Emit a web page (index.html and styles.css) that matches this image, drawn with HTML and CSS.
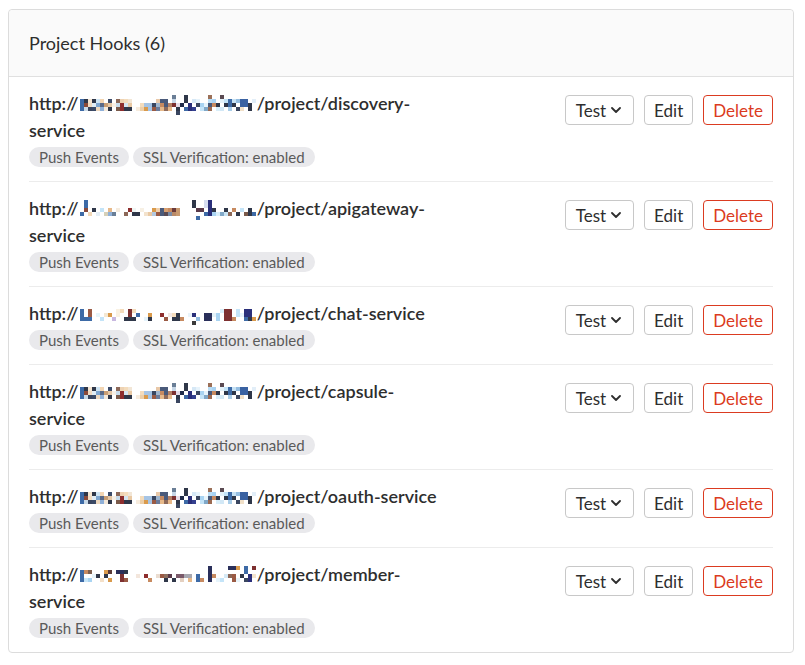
FILE: index.html
```html
<!DOCTYPE html>
<html lang="en">
<head>
<meta charset="utf-8">
<title>Project Hooks</title>
<link rel="stylesheet" href="styles.css">
</head>
<body>
<svg class="defs" width="0" height="0" aria-hidden="true">
  <defs>
    <symbol id="mA" viewBox="0 0 176 20">
      <rect x="0" y="4" width="4" height="12" fill="#3d6aa6"/>
      <rect x="4" y="4" width="4" height="4" fill="#2f3749"/>
      <rect x="4" y="8" width="4" height="4" fill="#8a4a3a"/>
      <rect x="4" y="12" width="4" height="4" fill="#c9d9e6"/>
      <rect x="8" y="4" width="4" height="4" fill="#f6e6d2"/>
      <rect x="8" y="8" width="4" height="4" fill="#f1dcc2"/>
      <rect x="8" y="12" width="4" height="4" fill="#3a4660"/>
      <rect x="12" y="4" width="4" height="4" fill="#2f3749"/>
      <rect x="12" y="8" width="4" height="4" fill="#e1edf5"/>
      <rect x="12" y="12" width="4" height="4" fill="#3b4a66"/>
      <rect x="16" y="4" width="4" height="4" fill="#cfe4f2"/>
      <rect x="16" y="8" width="4" height="4" fill="#7fa6cf"/>
      <rect x="16" y="12" width="4" height="4" fill="#eed8be"/>
      <rect x="20" y="4" width="4" height="4" fill="#f2d5b3"/>
      <rect x="20" y="8" width="4" height="4" fill="#5a6a88"/>
      <rect x="20" y="12" width="4" height="4" fill="#8fb0d8"/>
      <rect x="24" y="8" width="4" height="4" fill="#c99e74"/>
      <rect x="24" y="12" width="4" height="4" fill="#f5e9da"/>
      <rect x="28" y="4" width="4" height="4" fill="#3c4c6a"/>
      <rect x="28" y="8" width="4" height="4" fill="#e4c6a4"/>
      <rect x="28" y="12" width="4" height="4" fill="#2f3749"/>
      <rect x="32" y="8" width="4" height="4" fill="#f8efe4"/>
      <rect x="36" y="4" width="4" height="4" fill="#8c6858"/>
      <rect x="36" y="8" width="4" height="4" fill="#c7dcec"/>
      <rect x="36" y="12" width="4" height="4" fill="#7a5a4a"/>
      <rect x="40" y="4" width="4" height="4" fill="#eed2b2"/>
      <rect x="40" y="8" width="4" height="8" fill="#8e2e2e"/>
      <rect x="44" y="4" width="4" height="4" fill="#f4dcbc"/>
      <rect x="44" y="8" width="4" height="4" fill="#d6e6f2"/>
      <rect x="44" y="12" width="8" height="4" fill="#2f3749"/>
      <rect x="48" y="8" width="4" height="4" fill="#e9c9a4"/>
      <rect x="48" y="4" width="4" height="4" fill="#f2e6d6"/>
      <rect x="56" y="12" width="4" height="4" fill="#f7ecde"/>
      <rect x="60" y="8" width="4" height="4" fill="#f4dcbc"/>
      <rect x="60" y="12" width="4" height="4" fill="#edcfa8"/>
      <rect x="64" y="8" width="4" height="4" fill="#a6c4e4"/>
      <rect x="64" y="12" width="4" height="4" fill="#d99a4c"/>
      <rect x="68" y="8" width="4" height="8" fill="#a6c4e4"/>
      <rect x="72" y="8" width="4" height="4" fill="#3a4660"/>
      <rect x="72" y="12" width="4" height="4" fill="#9a5a44"/>
      <rect x="76" y="4" width="4" height="4" fill="#e8c8a8"/>
      <rect x="76" y="8" width="4" height="4" fill="#9fb6cf"/>
      <rect x="76" y="12" width="4" height="4" fill="#6b7b9a"/>
      <rect x="80" y="4" width="4" height="4" fill="#4a5a7a"/>
      <rect x="80" y="8" width="4" height="4" fill="#c78a60"/>
      <rect x="80" y="12" width="4" height="4" fill="#e7b98a"/>
      <rect x="84" y="4" width="4" height="8" fill="#4a5a7a"/>
      <rect x="84" y="12" width="4" height="4" fill="#8e6a5a"/>
      <rect x="88" y="8" width="4" height="4" fill="#b38066"/>
      <rect x="88" y="12" width="4" height="4" fill="#e7b98a"/>
      <rect x="92" y="0" width="4" height="4" fill="#6a7e96"/>
      <rect x="92" y="4" width="4" height="4" fill="#c6d6e6"/>
      <rect x="92" y="8" width="4" height="4" fill="#7d3030"/>
      <rect x="96" y="8" width="4" height="4" fill="#e6dce8"/>
      <rect x="96" y="12" width="4" height="4" fill="#2f3749"/>
      <rect x="96" y="16" width="4" height="4" fill="#3a4660"/>
      <rect x="100" y="8" width="4" height="4" fill="#1f2b4a"/>
      <rect x="104" y="0" width="4" height="8" fill="#2f3749"/>
      <rect x="104" y="12" width="4" height="4" fill="#3d6aa6"/>
      <rect x="108" y="8" width="4" height="8" fill="#2a2f7a"/>
      <rect x="112" y="4" width="4" height="4" fill="#d6e8f6"/>
      <rect x="112" y="12" width="4" height="4" fill="#34408e"/>
      <rect x="116" y="4" width="4" height="4" fill="#e7f3fb"/>
      <rect x="116" y="8" width="4" height="4" fill="#3a4660"/>
      <rect x="120" y="8" width="4" height="4" fill="#a9d4f2"/>
      <rect x="120" y="12" width="4" height="4" fill="#c4e4f8"/>
      <rect x="124" y="8" width="4" height="4" fill="#e6f4fc"/>
      <rect x="124" y="12" width="4" height="4" fill="#80a8c8"/>
      <rect x="128" y="0" width="4" height="4" fill="#9b7058"/>
      <rect x="128" y="4" width="4" height="4" fill="#b9dcf4"/>
      <rect x="128" y="8" width="4" height="4" fill="#4a5a7a"/>
      <rect x="128" y="12" width="4" height="4" fill="#9a6a52"/>
      <rect x="132" y="4" width="4" height="4" fill="#a8d2f2"/>
      <rect x="132" y="8" width="4" height="4" fill="#c78a60"/>
      <rect x="136" y="8" width="4" height="4" fill="#2f3749"/>
      <rect x="136" y="12" width="4" height="4" fill="#d9eef9"/>
      <rect x="140" y="0" width="4" height="4" fill="#5a4a52"/>
      <rect x="140" y="4" width="4" height="4" fill="#e4f2fa"/>
      <rect x="140" y="12" width="4" height="4" fill="#d2e8f6"/>
      <rect x="144" y="4" width="4" height="4" fill="#c4e4f8"/>
      <rect x="144" y="8" width="4" height="4" fill="#2f3749"/>
      <rect x="148" y="4" width="4" height="8" fill="#3d6aa6"/>
      <rect x="148" y="12" width="4" height="4" fill="#a9cde8"/>
      <rect x="152" y="8" width="4" height="4" fill="#2f3749"/>
      <rect x="152" y="4" width="4" height="4" fill="#c7e2f4"/>
      <rect x="156" y="4" width="4" height="4" fill="#94bde0"/>
      <rect x="156" y="12" width="4" height="4" fill="#3a4660"/>
      <rect x="160" y="4" width="8" height="8" fill="#3a62a2"/>
      <rect x="160" y="12" width="4" height="4" fill="#f1e0c8"/>
      <rect x="168" y="8" width="4" height="8" fill="#2f3749"/>
      <rect x="172" y="4" width="4" height="4" fill="#e2eef8"/>
    </symbol>
    <symbol id="mB" viewBox="0 0 176 20">
      <rect x="4" y="0" width="4" height="8" fill="#3d6aa6"/>
      <rect x="4" y="8" width="4" height="4" fill="#8a4a3a"/>
      <rect x="0" y="12" width="4" height="4" fill="#3d6aa6"/>
      <rect x="8" y="12" width="4" height="4" fill="#f2d8b8"/>
      <rect x="12" y="8" width="4" height="4" fill="#2f3749"/>
      <rect x="16" y="12" width="4" height="4" fill="#e4eef6"/>
      <rect x="20" y="8" width="4" height="4" fill="#c4e4f8"/>
      <rect x="24" y="12" width="4" height="4" fill="#d6d0b8"/>
      <rect x="28" y="8" width="4" height="4" fill="#e7b98a"/>
      <rect x="28" y="12" width="4" height="4" fill="#8fb0d8"/>
      <rect x="32" y="12" width="4" height="4" fill="#6a7e96"/>
      <rect x="36" y="8" width="4" height="4" fill="#f6ecdf"/>
      <rect x="44" y="12" width="4" height="4" fill="#8c6858"/>
      <rect x="48" y="8" width="4" height="4" fill="#8e2e2e"/>
      <rect x="52" y="8" width="4" height="4" fill="#eef6f4"/>
      <rect x="52" y="12" width="8" height="4" fill="#2f3749"/>
      <rect x="60" y="8" width="4" height="4" fill="#f7f0e4"/>
      <rect x="64" y="12" width="4" height="4" fill="#f3e2cc"/>
      <rect x="68" y="12" width="4" height="4" fill="#e9c9a4"/>
      <rect x="72" y="8" width="4" height="4" fill="#d99a4c"/>
      <rect x="72" y="12" width="4" height="4" fill="#b3c9e0"/>
      <rect x="76" y="12" width="4" height="4" fill="#9a5a44"/>
      <rect x="76" y="8" width="4" height="4" fill="#f0d0ac"/>
      <rect x="80" y="8" width="4" height="8" fill="#4a5a7a"/>
      <rect x="84" y="12" width="4" height="4" fill="#5a4a52"/>
      <rect x="84" y="8" width="4" height="4" fill="#d8a070"/>
      <rect x="88" y="8" width="4" height="4" fill="#c78a60"/>
      <rect x="88" y="12" width="4" height="4" fill="#7a8ca6"/>
      <rect x="92" y="8" width="4" height="4" fill="#6a3a3a"/>
      <rect x="92" y="12" width="4" height="4" fill="#b98a68"/>
      <rect x="96" y="8" width="4" height="8" fill="#c89a70"/>
      <rect x="112" y="0" width="4" height="8" fill="#2f3749"/>
      <rect x="116" y="8" width="8" height="4" fill="#5a3a4a"/>
      <rect x="116" y="16" width="4" height="4" fill="#3d6aa6"/>
      <rect x="124" y="12" width="4" height="4" fill="#3d6aa6"/>
      <rect x="124" y="0" width="4" height="8" fill="#d6ddf0"/>
      <rect x="128" y="0" width="4" height="16" fill="#2a2f7a"/>
      <rect x="132" y="12" width="4" height="4" fill="#a9d4f2"/>
      <rect x="132" y="8" width="4" height="4" fill="#2f3749"/>
      <rect x="136" y="12" width="4" height="4" fill="#d9eef9"/>
      <rect x="140" y="12" width="4" height="4" fill="#80a8c8"/>
      <rect x="144" y="8" width="4" height="4" fill="#2f3749"/>
      <rect x="144" y="12" width="4" height="4" fill="#c8e4f4"/>
      <rect x="148" y="12" width="4" height="4" fill="#8c6858"/>
      <rect x="152" y="8" width="4" height="4" fill="#c78a60"/>
      <rect x="156" y="12" width="4" height="4" fill="#2f3749"/>
      <rect x="160" y="8" width="4" height="4" fill="#c4e4f8"/>
      <rect x="164" y="12" width="4" height="4" fill="#7a5a4a"/>
      <rect x="168" y="8" width="4" height="8" fill="#2f3749"/>
      <rect x="172" y="12" width="4" height="4" fill="#3d6aa6"/>
    </symbol>
    <symbol id="mC" viewBox="0 0 176 20">
      <rect x="0" y="4" width="4" height="12" fill="#3d6aa6"/>
      <rect x="4" y="12" width="4" height="4" fill="#3d6aa6"/>
      <rect x="8" y="4" width="4" height="8" fill="#9a5a44"/>
      <rect x="8" y="12" width="4" height="4" fill="#3d6aa6"/>
      <rect x="16" y="8" width="4" height="4" fill="#e6f4fa"/>
      <rect x="20" y="12" width="4" height="4" fill="#c4e4f8"/>
      <rect x="24" y="8" width="4" height="4" fill="#f4e8d4"/>
      <rect x="28" y="8" width="4" height="4" fill="#d99a4c"/>
      <rect x="32" y="12" width="4" height="4" fill="#c8b8e0"/>
      <rect x="36" y="4" width="4" height="8" fill="#f9f1e2"/>
      <rect x="40" y="4" width="4" height="4" fill="#f4dcbc"/>
      <rect x="48" y="4" width="4" height="8" fill="#7d3030"/>
      <rect x="44" y="12" width="12" height="4" fill="#2f3749"/>
      <rect x="52" y="4" width="4" height="4" fill="#f3dcbc"/>
      <rect x="56" y="8" width="4" height="4" fill="#3d6aa6"/>
      <rect x="64" y="12" width="4" height="4" fill="#e6f4fc"/>
      <rect x="68" y="8" width="4" height="4" fill="#d99a4c"/>
      <rect x="68" y="12" width="4" height="4" fill="#2f3749"/>
      <rect x="80" y="8" width="4" height="4" fill="#8e2e2e"/>
      <rect x="84" y="12" width="4" height="4" fill="#9a5a44"/>
      <rect x="88" y="8" width="4" height="4" fill="#f2e8e4"/>
      <rect x="92" y="8" width="4" height="4" fill="#f4dcbc"/>
      <rect x="92" y="12" width="4" height="4" fill="#2f3749"/>
      <rect x="96" y="8" width="4" height="8" fill="#2f3749"/>
      <rect x="100" y="12" width="4" height="4" fill="#c78a60"/>
      <rect x="108" y="8" width="4" height="4" fill="#e9f4fb"/>
      <rect x="112" y="8" width="4" height="4" fill="#2a2f7a"/>
      <rect x="116" y="12" width="4" height="4" fill="#94bde0"/>
      <rect x="112" y="16" width="4" height="4" fill="#3a3a3a"/>
      <rect x="124" y="8" width="8" height="8" fill="#2a2f5a"/>
      <rect x="132" y="8" width="4" height="4" fill="#e4f2fa"/>
      <rect x="136" y="8" width="4" height="8" fill="#a9d4f2"/>
      <rect x="140" y="4" width="4" height="4" fill="#d9eef9"/>
      <rect x="144" y="4" width="8" height="12" fill="#7d3030"/>
      <rect x="152" y="12" width="4" height="4" fill="#c78a60"/>
      <rect x="156" y="4" width="4" height="8" fill="#c4e4f8"/>
      <rect x="160" y="8" width="4" height="4" fill="#e6f4fc"/>
      <rect x="164" y="4" width="8" height="8" fill="#2a2f7a"/>
      <rect x="164" y="12" width="4" height="4" fill="#3d6aa6"/>
      <rect x="168" y="12" width="4" height="4" fill="#2f3749"/>
      <rect x="172" y="12" width="4" height="4" fill="#d99a4c"/>
    </symbol>
    <symbol id="mD" viewBox="0 0 176 20">
      <rect x="0" y="4" width="4" height="12" fill="#3d6aa6"/>
      <rect x="4" y="4" width="4" height="4" fill="#c78a60"/>
      <rect x="4" y="12" width="4" height="4" fill="#c8e6f8"/>
      <rect x="8" y="4" width="4" height="4" fill="#7d6050"/>
      <rect x="8" y="12" width="4" height="4" fill="#a9d4f2"/>
      <rect x="12" y="8" width="4" height="4" fill="#e8f4fa"/>
      <rect x="16" y="8" width="4" height="4" fill="#2f3749"/>
      <rect x="20" y="12" width="4" height="4" fill="#f4e0c8"/>
      <rect x="24" y="4" width="4" height="4" fill="#d99a4c"/>
      <rect x="24" y="8" width="4" height="4" fill="#2f3749"/>
      <rect x="28" y="12" width="4" height="4" fill="#d99a4c"/>
      <rect x="28" y="4" width="4" height="4" fill="#5a3a3a"/>
      <rect x="36" y="4" width="8" height="4" fill="#2a2f5a"/>
      <rect x="44" y="4" width="4" height="4" fill="#2f3749"/>
      <rect x="40" y="8" width="4" height="8" fill="#7d3030"/>
      <rect x="44" y="12" width="4" height="4" fill="#9a5a44"/>
      <rect x="56" y="8" width="4" height="4" fill="#f3e6dc"/>
      <rect x="64" y="8" width="4" height="4" fill="#8e2e2e"/>
      <rect x="68" y="12" width="4" height="4" fill="#c78a60"/>
      <rect x="76" y="8" width="4" height="4" fill="#eadcd0"/>
      <rect x="80" y="8" width="4" height="4" fill="#9a5a44"/>
      <rect x="84" y="12" width="4" height="4" fill="#2f3749"/>
      <rect x="84" y="8" width="4" height="4" fill="#8e7060"/>
      <rect x="88" y="8" width="4" height="4" fill="#5a3a4a"/>
      <rect x="92" y="12" width="4" height="4" fill="#2f3749"/>
      <rect x="96" y="8" width="8" height="4" fill="#7a5a6a"/>
      <rect x="100" y="12" width="4" height="4" fill="#e4d0c0"/>
      <rect x="104" y="8" width="8" height="4" fill="#a8a8b0"/>
      <rect x="108" y="12" width="4" height="4" fill="#e7b98a"/>
      <rect x="116" y="8" width="4" height="8" fill="#3d6aa6"/>
      <rect x="120" y="12" width="4" height="4" fill="#c78a60"/>
      <rect x="128" y="0" width="4" height="16" fill="#2a2f5a"/>
      <rect x="132" y="8" width="4" height="4" fill="#c78a60"/>
      <rect x="136" y="12" width="4" height="4" fill="#e6f4fc"/>
      <rect x="140" y="12" width="4" height="4" fill="#c4e4f8"/>
      <rect x="144" y="8" width="4" height="4" fill="#d6eaf6"/>
      <rect x="148" y="0" width="8" height="4" fill="#2a2f5a"/>
      <rect x="148" y="8" width="4" height="4" fill="#8c6858"/>
      <rect x="152" y="8" width="4" height="8" fill="#9a5a44"/>
      <rect x="156" y="0" width="4" height="4" fill="#d99a4c"/>
      <rect x="156" y="12" width="4" height="4" fill="#e8f4fa"/>
      <rect x="160" y="8" width="4" height="4" fill="#2f3749"/>
      <rect x="164" y="0" width="4" height="8" fill="#3d6aa6"/>
      <rect x="164" y="12" width="4" height="4" fill="#3a4660"/>
      <rect x="168" y="8" width="4" height="8" fill="#2a2f7a"/>
      <rect x="172" y="0" width="4" height="4" fill="#7d3030"/>
      <rect x="172" y="8" width="4" height="4" fill="#f4e4cc"/>
    </symbol>
    <symbol id="caret" viewBox="0 0 10 6">
      <path d="M1 1l4 4 4-4" fill="none" stroke="#2e2e2e" stroke-width="1.8" stroke-linecap="round" stroke-linejoin="round"/>
    </symbol>
  </defs>
</svg>

<div class="card">
  <div class="card-header">Project Hooks (6)</div>
  <ul class="hook-list">
    <li class="hook">
      <div class="hook-info">
        <div class="hook-url">http://<svg class="mosaic" viewBox="0 0 176 20"><use href="#mA"/></svg>/project/discovery-service</div>
        <div class="badges"><span class="badge">Push Events</span><span class="badge">SSL Verification: enabled</span></div>
      </div>
      <div class="actions">
        <button class="btn btn-test">Test <svg class="caret"><use href="#caret"/></svg></button>
        <button class="btn">Edit</button>
        <button class="btn btn-remove">Delete</button>
      </div>
    </li>
    <li class="hook">
      <div class="hook-info">
        <div class="hook-url">http://<svg class="mosaic" viewBox="0 0 176 20"><use href="#mB"/></svg>/project/apigateway-service</div>
        <div class="badges"><span class="badge">Push Events</span><span class="badge">SSL Verification: enabled</span></div>
      </div>
      <div class="actions">
        <button class="btn btn-test">Test <svg class="caret"><use href="#caret"/></svg></button>
        <button class="btn">Edit</button>
        <button class="btn btn-remove">Delete</button>
      </div>
    </li>
    <li class="hook">
      <div class="hook-info">
        <div class="hook-url">http://<svg class="mosaic" viewBox="0 0 176 20"><use href="#mC"/></svg>/project/chat-service</div>
        <div class="badges"><span class="badge">Push Events</span><span class="badge">SSL Verification: enabled</span></div>
      </div>
      <div class="actions">
        <button class="btn btn-test">Test <svg class="caret"><use href="#caret"/></svg></button>
        <button class="btn">Edit</button>
        <button class="btn btn-remove">Delete</button>
      </div>
    </li>
    <li class="hook">
      <div class="hook-info">
        <div class="hook-url">http://<svg class="mosaic" viewBox="0 0 176 20"><use href="#mA"/></svg>/project/capsule-service</div>
        <div class="badges"><span class="badge">Push Events</span><span class="badge">SSL Verification: enabled</span></div>
      </div>
      <div class="actions">
        <button class="btn btn-test">Test <svg class="caret"><use href="#caret"/></svg></button>
        <button class="btn">Edit</button>
        <button class="btn btn-remove">Delete</button>
      </div>
    </li>
    <li class="hook">
      <div class="hook-info">
        <div class="hook-url">http://<svg class="mosaic" viewBox="0 0 176 20"><use href="#mA"/></svg>/project/oauth-service</div>
        <div class="badges"><span class="badge">Push Events</span><span class="badge">SSL Verification: enabled</span></div>
      </div>
      <div class="actions">
        <button class="btn btn-test">Test <svg class="caret"><use href="#caret"/></svg></button>
        <button class="btn">Edit</button>
        <button class="btn btn-remove">Delete</button>
      </div>
    </li>
    <li class="hook">
      <div class="hook-info">
        <div class="hook-url">http://<svg class="mosaic" viewBox="0 0 176 20"><use href="#mD"/></svg>/project/member-service</div>
        <div class="badges"><span class="badge">Push Events</span><span class="badge">SSL Verification: enabled</span></div>
      </div>
      <div class="actions">
        <button class="btn btn-test">Test <svg class="caret"><use href="#caret"/></svg></button>
        <button class="btn">Edit</button>
        <button class="btn btn-remove">Delete</button>
      </div>
    </li>
  </ul>
</div>
</body>
</html>
```

FILE: styles.css
```css
* { box-sizing: border-box; }

html, body {
  margin: 0;
  padding: 0;
  background: #fff;
}

body {
  font-family: Lato, "Noto Sans", sans-serif;
  color: #2e2e2e;
}

.defs {
  position: absolute;
  width: 0;
  height: 0;
  overflow: hidden;
}

.card {
  margin: 9px 11px 0 8px;
  width: 786px;
  border: 1px solid #dcdcdc;
  border-radius: 4px;
  background: #fff;
}

.card-header {
  height: 67px;
  padding: 0 20px;
  display: flex;
  align-items: center;
  font-size: 18px;
  color: #2e2e2e;
  background: #fafafa;
  border-bottom: 1px solid #e0e0e0;
  border-radius: 4px 4px 0 0;
}

.hook-list {
  list-style: none;
  margin: 0;
  padding: 0 20px;
}

.hook {
  display: flex;
  justify-content: space-between;
  align-items: flex-start;
  padding: 13px 0 14px;
  border-bottom: 1px solid #ececec;
}

.hook:last-child {
  border-bottom: none;
}

.hook-info {
  width: 415px;
}

.hook-url {
  font-size: 18px;
  font-weight: 600;
  line-height: 27px;
  color: #2e2e2e;
}

.mosaic {
  width: 176px;
  height: 20px;
  margin: 0 1px;
  vertical-align: -5px;
}

.badges {
  display: flex;
  gap: 4px;
  margin-top: 3px;
}

.badge {
  display: inline-flex;
  align-items: center;
  height: 20px;
  padding: 0 10px;
  border-radius: 10px;
  background: #e9e9ec;
  color: #5a5a5a;
  font-size: 15px;
}

.actions {
  display: flex;
  gap: 10px;
  margin-top: 5px;
}

.btn {
  height: 30px;
  padding: 0 9px;
  font-family: Lato, "Noto Sans", sans-serif;
  font-size: 17px;
  color: #2e2e2e;
  background: #fff;
  border: 1px solid #c8c8c8;
  border-radius: 4px;
  display: inline-flex;
  align-items: center;
  gap: 5px;
}

.btn-test {
  padding: 0 12px 0 10px;
}

.caret {
  width: 10px;
  height: 6px;
}

.btn-remove {
  color: #db3b21;
  border-color: #db3b21;
}
```
